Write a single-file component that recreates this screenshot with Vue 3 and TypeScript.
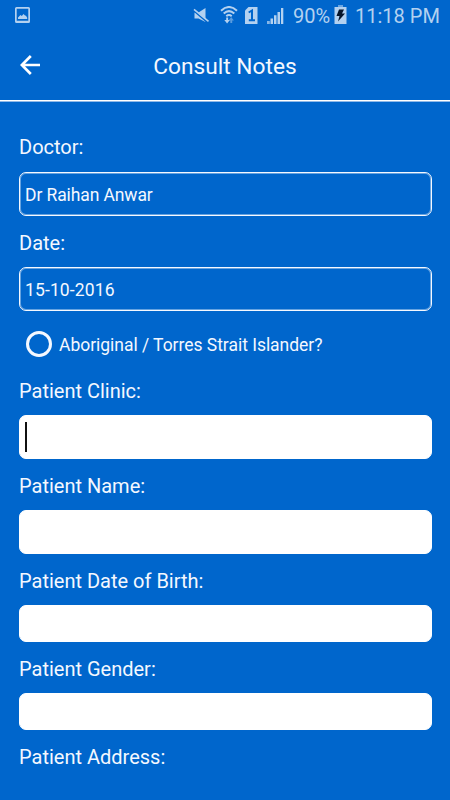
<script setup lang="ts">
import { ref } from 'vue'

interface Field {
  id: string
  label: string
  value: string
  kind: 'outline' | 'filled'
  short?: boolean
  active?: boolean
}

const details: Field[] = [
  { id: 'doctor', label: 'Doctor:', value: 'Dr Raihan Anwar', kind: 'outline' },
  { id: 'date', label: 'Date:', value: '15-10-2016', kind: 'outline' },
]

const patient: Field[] = [
  { id: 'clinic', label: 'Patient Clinic:', value: '', kind: 'filled', active: true },
  { id: 'name', label: 'Patient Name:', value: '', kind: 'filled' },
  { id: 'dob', label: 'Patient Date of Birth:', value: '', kind: 'filled', short: true },
  { id: 'gender', label: 'Patient Gender:', value: '', kind: 'filled', short: true },
]

const islander = ref(false)
</script>

<template>
  <div class="screen">
    <div class="status">
      <svg class="shot" width="16" height="17" viewBox="0 0 16 17">
        <path fill-rule="evenodd" d="M1.5 0h12A1.5 1.5 0 0 1 15 1.5v13a1.5 1.5 0 0 1-1.5 1.5h-12A1.5 1.5 0 0 1 0 14.500v-13A1.500 1.500 0 0 1 1.500 0ZM1.700 1.700v12h11.600v-12Z" />
        <path d="M3 12V10.500L5.500 8l1.300 1L8.500 7l1.500 1.500 1 .2 1.200 2V12Z" />
      </svg>
      <svg class="mute" width="18" height="16" viewBox="0 0 18 16">
        <path d="M1.500 4.500h4L12.500 0v14L5.500 10.500h-4Z" />
        <path class="cut" d="M1 2.800 15 14.800" />
        <path class="slash" d="M1 1.300 15.500 13.300" />
      </svg>
      <svg class="wifi" width="18" height="19" viewBox="0 0 18 19">
        <g class="arcs">
          <path d="M1 4.700Q9-2.700 17 4.700" />
          <path d="M3.700 7.500Q9 2.700 14.300 7.500" />
          <path d="M6.300 10.200Q9 7.800 11.700 10.200" />
        </g>
        <path d="M6.200 11.500h1.900V14h1.700L7.100 17.500 4.300 14h1.900Z" />
        <path opacity=".5" d="M10.300 17h1.900v-2.500h1.700L11.200 11 8.600 14.500h1.700Z" />
      </svg>
      <svg class="sim" width="14" height="17" viewBox="0 0 14 17">
        <path d="M3.500 0H12.500V17H0V3.500Z" />
        <path class="digit" d="M3.700 5.500 7 3.500V13.300M3.800 13.300H10" />
      </svg>
      <svg class="signal" width="17" height="16" viewBox="0 0 17 16">
        <path opacity=".75" d="M0 13h2.800v3H0Z" />
        <path d="M3.500 10.500H6V16H3.500ZM7 7.200h2.500V16H7ZM10.500 4H13v12h-2.500ZM14 0h2.300v16H14Z" />
      </svg>
      <span class="percent">90%</span>
      <svg class="battery" width="13" height="19" viewBox="0 0 13 19">
        <path opacity=".6" d="M4 0h5v2H4Z" />
        <path d="M.5 2h12v17H.5Z" />
        <path class="bolt" d="M5 4.500h5L8 8.500h3L4 16.500 5.500 11H2.500Z" />
      </svg>
      <span class="clock">11:18 PM</span>
    </div>

    <header class="bar">
      <button class="back" type="button" aria-label="Back">
        <svg width="21" height="20" viewBox="0 0 21 20">
          <path d="M20 10H2M10.800 1 1.800 10l9 9" />
        </svg>
      </button>
      <h1 class="title">Consult Notes</h1>
    </header>

    <main class="form">
      <section v-for="f in details" :key="f.id" class="field">
        <div class="label">{{ f.label }}</div>
        <div class="box outline" :class="f.id">{{ f.value }}</div>
      </section>

      <div class="option" role="radio" :aria-checked="islander" @click="islander = !islander">
        <span class="ring" :class="{ checked: islander }"></span>
        <span class="option-text">Aboriginal / Torres Strait Islander?</span>
      </div>

      <section v-for="f in patient" :key="f.id" class="field">
        <div class="label">{{ f.label }}</div>
        <div class="box" :class="[f.kind, { short: f.short }]">
          <span v-if="f.active" class="caret"></span>{{ f.value }}
        </div>
      </section>

      <div class="label">Patient Address:</div>
    </main>
  </div>
</template>

<style>
body {
  background: #0066cc;
}
</style>

<style scoped>
.screen {
  box-sizing: border-box;
  width: 450px;
  height: 800px;
  overflow: hidden;
  background: #0066cc;
  color: #f4f8ff;
  font-family: Roboto, 'Liberation Sans', sans-serif;
}
.status {
  display: flex;
  align-items: flex-start;
  box-sizing: border-box;
  height: 31px;
  padding: 0 0 0 15px;
  color: #b3d1f0;
  fill: #b3d1f0;
  white-space: nowrap;
}
.status svg {
  flex: none;
}
.status .shot {
  margin-top: 7px;
}
.status .mute {
  margin: 8px 0 0 162px;
}
.cut {
  stroke: #0066cc;
  stroke-width: 1.6;
}
.slash {
  stroke: #b3d1f0;
  stroke-width: 1.6;
}
.status .wifi {
  margin: 6px 0 0 9px;
}
.arcs {
  fill: none;
  stroke: #b3d1f0;
  stroke-width: 2;
}
.status .sim {
  margin: 7px 0 0 7px;
}
.digit {
  fill: none;
  stroke: #0066cc;
  stroke-width: 2;
}
.status .signal {
  margin: 8px 0 0 8px;
}
.percent,
.clock {
  font-size: 20px;
  line-height: 33px;
}
.percent {
  width: 41px;
  margin-left: 9px;
}
.status .battery {
  margin-top: 5px;
}
.bolt {
  fill: #06152b;
}
.clock {
  margin-left: 8px;
}
.bar {
  display: grid;
  grid-template-columns: 60px 1fr 60px;
  align-items: center;
  box-sizing: border-box;
  height: 70px;
  border-bottom: 1px solid #fff;
  box-shadow: 0 1px 0 #8fb9e8;
}
.back {
  display: flex;
  margin: 0;
  padding: 0 0 2px 20px;
  border: 0;
  background: none;
}
.back path {
  fill: none;
  stroke: #fff;
  stroke-width: 2.7;
}
.title {
  margin: 0;
  padding-top: 2px;
  font-size: 22.7px;
  font-weight: 400;
  line-height: 30px;
  text-align: center;
}
.form {
  padding: 33px 18.5px 0;
}
.field {
  margin-bottom: 15px;
}
.label {
  margin-bottom: 12px;
  padding-left: 0.5px;
  font-size: 20px;
  line-height: 24px;
}
.field:first-child .label {
  line-height: 26px;
}
.box {
  display: flex;
  align-items: center;
  box-sizing: border-box;
  height: 44px;
  padding: 2px 5.5px 0;
  border: 1px solid #f4f8ff;
  border-radius: 7px;
  font-size: 17.5px;
}
.box.outline {
  box-shadow: inset 0 0 0 1px rgba(255, 255, 255, 0.4);
}
.box.doctor {
  padding-top: 1px;
  letter-spacing: -0.1px;
}
.box.date {
  letter-spacing: 0.13px;
}
.box.filled {
  padding: 0 5.5px;
  border-color: #fff;
  background: #fff;
  color: #111;
}
.box.short {
  height: 37px;
}
.caret {
  width: 2px;
  height: 30px;
  background: #111;
}
.option {
  display: flex;
  align-items: center;
  gap: 7px;
  height: 36px;
  margin-bottom: 17px;
  padding-left: 7.5px;
}
.ring {
  box-sizing: border-box;
  width: 26px;
  height: 26px;
  border: 3px solid #f4f8ff;
  border-radius: 50%;
}
.ring.checked {
  background: radial-gradient(circle, #fff 5px, transparent 6px);
}
.option-text {
  padding-top: 1px;
  font-size: 17.5px;
  letter-spacing: -0.03px;
}
</style>
